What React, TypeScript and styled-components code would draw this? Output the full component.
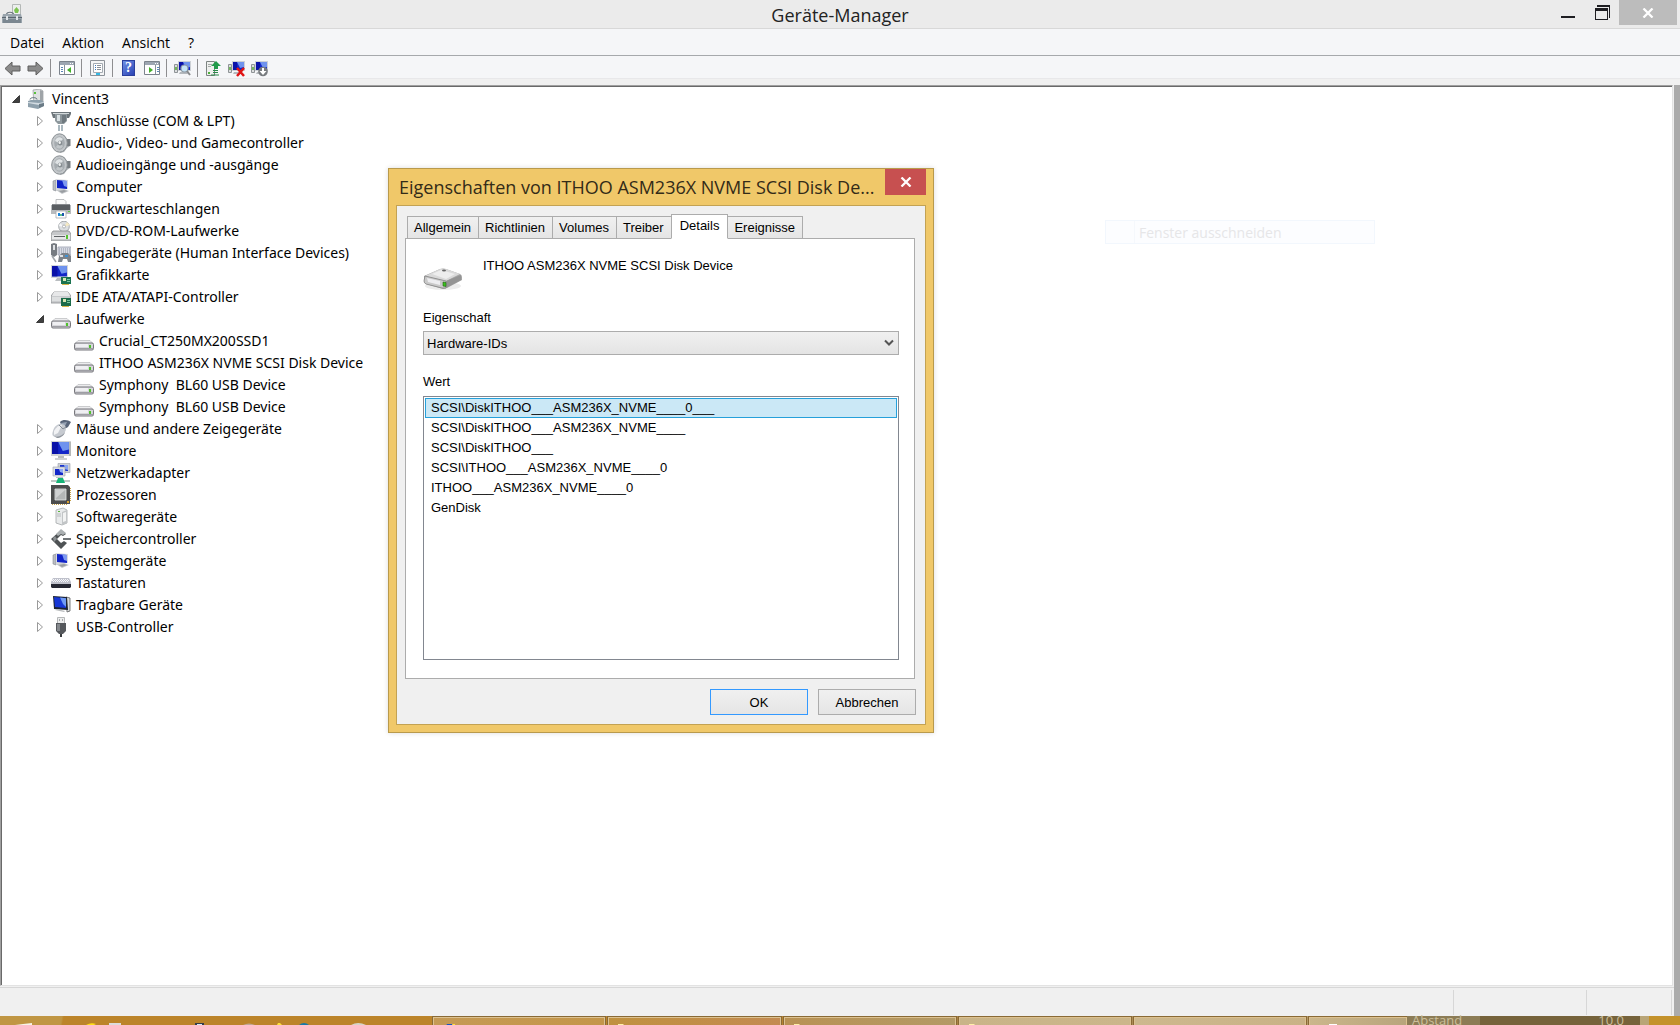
import React, { useState } from "react";
import styled, { createGlobalStyle, css } from "styled-components";

const ui = '"Open Sans", "Noto Sans", sans-serif';
const treeFont = '"Noto Sans", "Open Sans", sans-serif';
const classic = '"Liberation Sans", Arial, sans-serif';

const Global = createGlobalStyle`
  *, *::before, *::after { box-sizing: border-box; }
  body { margin: 0; font-family: ${ui}; color: #000; background: #f0f0f0; overflow: hidden; }
  button, select { font: inherit; color: inherit; margin: 0; padding: 0; border: 0; border-radius: 0; background: none; }
  ul { list-style: none; margin: 0; padding: 0; }
  svg { display: block; flex: none; }
`;

/* ---------- icons ---------- */

type IconName =
  | "toolbox" | "host" | "port" | "speaker" | "computer" | "printer" | "dvd" | "hid" | "display"
  | "ide" | "drive" | "mouse" | "monitor" | "network" | "cpu" | "software" | "storage"
  | "keyboard" | "portable" | "usb";

const screenBlue = (
  <>
    <path d="M0 0h11v8H0z" fill="#1226c8" />
    <path d="M4 0h7v5L7 6z" fill="#6f93ee" />
    <path d="M0 0h4v8H0z" fill="#0a12a8" />
  </>
);

const art: Record<IconName, React.ReactNode> = {
  toolbox: (
    <>
      <path d="M10.500 .500h8v11h-8z" fill="#eceeed" stroke="#b4b8b6" />
      <path d="M12 6l2.500-3L17 6l-1 3h-3z" fill="#7cc34f" />
      <path d="M4.500 10.500c0-3 7-3 7 0" fill="none" stroke="#6c777f" strokeWidth="1.200" />
      <path d="M1 10h18l1 4v5H0v-5z" fill="#9aa5ad" />
      <path d="M0 13h20v1H0z" fill="#5b666f" />
      <path d="M1 15h18v4H1z" fill="#7b8790" />
      <path d="M4 12h2v4H4zM14 12h2v4h-2z" fill="#dfe4e8" />
    </>
  ),
  host: (
    <>
      <path d="M6 1l7-1 3 2v14l-9 1z" fill="#dfe1e2" stroke="#a2a6a8" strokeWidth=".8" />
      <path d="M13 1l3 1v14h-3z" fill="#9fa4a8" />
      <path d="M7 3h2v2H7z" fill="#59c23a" />
      <path d="M3 10.500c0-2.500 7-2.500 7 0" fill="none" stroke="#62707a" />
      <path d="M1 12l3-1h10l3 2v4l-6 3-10-2z" fill="#8ea0ac" />
      <path d="M1 13l11 1 5-1v1l-5 2-11-2z" fill="#d3dce2" />
      <path d="M12 15l5-1v3l-5 2z" fill="#6b7b86" />
    </>
  ),
  port: (
    <>
      <path d="M0 1h20v2l-1 2-1 2h-2V4H4v3H2L1 4z" fill="#6d767b" />
      <path d="M4 2h12v8l-3 3H7l-3-3z" fill="#8d979c" />
      <path d="M6 4h3v6H6z" fill="#d8e0e3" />
      <path d="M2 2h16v1H2z" fill="#d5dbdd" />
      <path d="M11 4h4v6l-2 2h-2z" fill="#6f797f" />
      <path d="M7 14h2v6H7zM10 14h2v6h-2z" fill="#aab8bf" />
    </>
  ),
  speaker: (
    <>
      <path d="M9 1l4 1 3 4 3 1v6l-3 2-3 4-4 1z" fill="#a8adb0" />
      <path d="M16 6h3.500v7H16z" fill="#777d81" />
      <ellipse cx="8.500" cy="10" rx="7.800" ry="9.200" fill="#c3c7ca" stroke="#8a9094" />
      <ellipse cx="8.500" cy="10" rx="5.300" ry="6.800" fill="#a6acb0" />
      <path d="M4 8c1-4 5-5 8-2l-4 4z" fill="#dfe3e5" />
      <path d="M5 14l3-4 4 3c-1 3-5 3.500-7 1z" fill="#c2c7ca" />
      <ellipse cx="9" cy="10" rx="2.200" ry="2.600" fill="#858c90" />
      <ellipse cx="8.700" cy="9.500" rx="1.200" ry="1.500" fill="#eef0f0" />
    </>
  ),
  computer: (
    <>
      <path d="M2 4l3-1v11l-3-1z" fill="#b9bdc2" stroke="#8a8f96" strokeWidth=".6" />
      <path d="M5 2l12 1v9l-12 1z" fill="#d9dbe0" />
      <path d="M6 3l10 1v8l-10-1z" fill="#1124c9" />
      <path d="M11 3l5 1v6l-3-1z" fill="#7f9af0" />
      <path d="M5 13l8-1 5 2-7 3z" fill="#c5c8cb" />
      <path d="M8 14l5-1 3 1-5 2z" fill="#999da1" />
    </>
  ),
  printer: (
    <>
      <path d="M5 .500h8l2 2v6H5z" fill="#fafafa" stroke="#adb0b3" strokeWidth=".8" />
      <path d="M0 6h20v9H0z" fill="#b9bcbf" />
      <path d="M1 5h18v6H1z" fill="#5a5e62" />
      <path d="M1 5h18v1H1z" fill="#86898d" />
      <path d="M17 12h2v1h-2z" fill="#5ac73c" />
      <path d="M5 12h10v7H5z" fill="#fff" stroke="#a7aaad" strokeWidth=".8" />
      <path d="M7 14h2v3H7z" fill="#1c86d8" /><path d="M9 15h2v2H9z" fill="#5abf8a" /><path d="M11 14h2v3h-2z" fill="#1b56ad" />
    </>
  ),
  dvd: (
    <>
      <circle cx="13" cy="5.500" r="5.300" fill="#dcdfe1" stroke="#a5a9ac" />
      <path d="M13 6l3-5 3 3z" fill="#f4e9c4" /><path d="M13 6l-5-1 1-3z" fill="#f7f8fa" />
      <circle cx="13" cy="5.500" r="1.500" fill="#fff" stroke="#989ca0" strokeWidth=".7" />
      <path d="M2 10h16l2 3v7H0v-7z" fill="#c6c8ca" stroke="#86898c" strokeWidth=".8" />
      <path d="M1 14h18v4H1z" fill="#e6e7e8" />
      <path d="M3 15h11v1H3z" fill="#5d6164" />
      <path d="M15 14h2v4h-2z" fill="#55c32f" />
    </>
  ),
  hid: (
    <>
      <path d="M7 4h13v8H7z" fill="#d8dbe4" stroke="#9ba0ad" strokeWidth=".8" />
      <path d="M8 6h11M8 8h11M8 10h11" stroke="#8f95a5" strokeDasharray="1 1" />
      <path d="M0 1l3-1 3 1v11l-3 2-3-2z" fill="#777c82" />
      <path d="M2 2h2v5H2z" fill="#dfe2e5" />
      <path d="M1 13l4 6" stroke="#a0a5aa" strokeWidth="1.500" />
      <path d="M8 13l3-3h6l3 3v6h-3l-1-3h-4l-1 3H7z" fill="#7d838a" />
      <path d="M9 12h3v2H9z" fill="#e0e4e8" /><path d="M14 12h3v2h-3z" fill="#3f90d2" />
    </>
  ),
  display: (
    <>
      <path d="M0 0h17v13H0z" fill="#d4d7da" />
      <g transform="translate(1 1) scale(1.360 1.300)">{screenBlue}</g>
      <path d="M6 13h5l1 3H4z" fill="#b9bdc0" />
      <path d="M10 12h10v7H10z" fill="#1b7350" />
      <path d="M12 13h3v3h-3z" fill="#d9e8b6" /><path d="M16 14h3v1h-3zM16 16h3v1h-3z" fill="#7ec9a5" />
      <path d="M11 19h7v1h-7z" fill="#d9b64c" />
    </>
  ),
  ide: (
    <>
      <path d="M3 5h14l3 4v7H0V9z" fill="#c9cbcd" stroke="#8b8e91" strokeWidth=".8" />
      <path d="M3 5h14l2 4H1z" fill="#e7e8e9" />
      <path d="M1 10h9v4H1z" fill="#dddfe0" />
      <path d="M10 11h10v8H10z" fill="#1b6b49" />
      <path d="M12 12h3v3h-3z" fill="#d5e5b0" /><path d="M16 13h3v1h-3zM16 15h3v1h-3z" fill="#79c49c" />
      <path d="M11 19h7v1h-7z" fill="#d9b64c" />
    </>
  ),
  drive: (
    <>
      <path d="M4 9.500h12l3 3H1z" fill="#ececee" stroke="#b9babd" strokeWidth=".7" />
      <rect x=".5" y="12" width="19" height="7" rx="1.500" fill="#d6d6da" stroke="#77777c" />
      <path d="M2 13h12v3H2z" fill="#efeff2" />
      <path d="M1 17h18v1H1z" fill="#9e9ea4" />
      <path d="M15 14h2v3h-2z" fill="#4fc22b" />
    </>
  ),
  mouse: (
    <>
      <path d="M9 3c3-3 8-2 11 0l-3 5-5 3z" fill="#596579" />
      <path d="M10 4l6-1-3 6z" fill="#98a4b5" />
      <path d="M2 12c1-5 6-8 9-7 4 1 5 4 3 8-2 4-6 6-10 5-3-1-3-3-2-6z" fill="#c6cad0" />
      <path d="M3 12c2-4 5-6 8-6l-4 8-4 2z" fill="#f1f2f4" />
      <path d="M8 6l4 4 3-2" stroke="#848b94" fill="none" />
      <path d="M3 17c4 2 9-1 11-4-1 4-5 6-8 6z" fill="#8f959c" />
    </>
  ),
  monitor: (
    <>
      <path d="M0 0h20v15H0z" fill="#d2d4d4" />
      <g transform="translate(1 1) scale(1.540 1.500)">{screenBlue}</g>
      <path d="M18 1h2v14h-2z" fill="#b5b8b8" />
      <path d="M7 15h6v2H7z" fill="#b9bcbc" /><path d="M4 17h12v2H4z" fill="#cfd1d1" />
    </>
  ),
  network: (
    <>
      <path d="M7 .500h12v9H7z" fill="#cdd1d8" stroke="#9a9fa8" strokeWidth=".6" />
      <path d="M9 2h8v6H9z" fill="#1a35d0" /><path d="M13 2h4v5l-3-1z" fill="#89a5f2" />
      <path d="M2 4h12v9H2z" fill="#dcdfe4" stroke="#9a9fa8" strokeWidth=".6" />
      <path d="M4 6h8v6H4z" fill="#1226c8" /><path d="M8 6h4v4l-3-1z" fill="#8fa9f3" />
      <path d="M5 14h7v1H5z" fill="#bfc3c8" />
      <path d="M0 17h19v2H0z" fill="#bfc9c6" /><path d="M7 15h5l2 5H5z" fill="#17b478" />
    </>
  ),
  cpu: (
    <>
      <path d="M1 19.500h16" stroke="#c6a14b" strokeDasharray="1 1" /><path d="M19.500 3v14" stroke="#c6a14b" strokeDasharray="1 1" />
      <path d="M0 0h17l2 2v17H0z" fill="#4c4d4e" />
      <path d="M4 4h11v11H4z" fill="#b3b6b7" stroke="#e5e7e7" strokeWidth=".8" />
      <path d="M5 5h9l-9 8z" fill="#cfd1d2" /><path d="M16 16h2v2h-2z" fill="#dba22e" />
    </>
  ),
  software: (
    <>
      <path d="M5 3l7-2 4 2v13l-5 2-6-2z" fill="#e8eaeb" stroke="#a4a8aa" strokeWidth=".8" />
      <path d="M11 5l5-2v13l-5 2z" fill="#c2c5c7" />
      <path d="M12 6l3-1v9l-3 1z" fill="#f2f3f3" />
      <path d="M7 4h2v1H7z" fill="#59b63d" /><path d="M6 7h4M6 9h4" stroke="#b6babc" />
    </>
  ),
  storage: (
    <>
      <path d="M10 1l5 4-3 2-2-1-4 4 4 4 3-2 3 2-6 6L0 10z" fill="#4e5254" />
      <path d="M10 0l5 4-3 2-2-1-3 2-2-2z" fill="#abb0b2" />
      <path d="M12 9h8v2h-8z" fill="#707578" /><path d="M2 9l2-2 2 3-3 3z" fill="#8b9093" />
    </>
  ),
  keyboard: (
    <>
      <path d="M2 5h16l2 4v5H0V9z" fill="#bfc1cb" />
      <path d="M2 6.500h16M2 8.500h16" stroke="#f5f6fb" strokeDasharray="1 1" /><path d="M1 7.500h18" stroke="#f5f6fb" strokeDasharray="1 1" />
      <path d="M0 11h20v3l-1 1H1l-1-1z" fill="#262833" />
    </>
  ),
  portable: (
    <>
      <path d="M15 2l4 1v13l-3 1z" fill="#d8dada" stroke="#5d6061" strokeWidth=".8" />
      <path d="M2 1l14 1 1 13L3 14z" fill="#1d2433" />
      <path d="M3 2l12 1.200v9.800L4 12z" fill="#1637d6" />
      <path d="M9 2.600l6 .600v8.800l-3-3z" fill="#6f9bf5" />
      <path d="M6 14l8 2-1 1-9-2z" fill="#b9bcbe" />
    </>
  ),
  usb: (
    <>
      <path d="M6.500.500h7v6h-7z" fill="#eceded" stroke="#b5b7b8" />
      <path d="M8 2h1v2H8zM11 2h1v2h-1z" fill="#a6a8aa" />
      <path d="M5 6h10v8l-3 3H8l-3-3z" fill="#55585c" /><path d="M6 7h3v7H6z" fill="#85898d" />
      <path d="M9 17h2v3H9z" fill="#3b3d40" />
    </>
  ),
};

const Icon = ({ name }: { name: IconName }) => (
  <svg width="20" height="20" viewBox="0 0 20 20" aria-hidden="true">{art[name]}</svg>
);

const Cross = ({ size }: { size: number }) => (
  <svg width={size} height={size - 2} viewBox="0 0 12 10" aria-hidden="true">
    <path d="M1.500.500l9 9M10.500.500l-9 9" stroke="#fff" strokeWidth="2.300" />
  </svg>
);

/* ---------- main window ---------- */

const Screen = styled.div`
  position: relative;
  display: flex;
  flex-direction: column;
  height: 100vh;
`;

const TitleBar = styled.header`
  display: grid;
  grid-template-columns: 1fr auto 1fr;
  align-items: start;
  height: 29px;
  background: #ebebeb;
  border-bottom: 1px solid #d8d8d8;
`;

const AppBadge = styled.span`
  padding: 4px 2px;
`;

const WindowTitle = styled.h1`
  margin: 0;
  padding-top: 2px;
  font-size: 18px;
  line-height: 26px;
  font-weight: 400;
  color: #222;
`;

const Controls = styled.div`
  display: flex;
  justify-content: flex-end;
  padding-right: 3px;
`;

const Control = styled.button<{ $w: number; $fill?: string }>`
  display: flex;
  align-items: center;
  justify-content: center;
  width: ${(p) => p.$w}px;
  height: 25px;
  background: ${(p) => p.$fill ?? "transparent"};
`;

const MenuBar = styled.nav`
  display: flex;
  height: 27px;
  padding-left: 1px;
  background: #f5f6f8;
  border-bottom: 1px solid #a6a9ac;
`;

const MenuItem = styled.button`
  padding: 0 9px;
  font-size: 14px;
  line-height: 28px;
`;

const ToolBar = styled.div`
  display: flex;
  align-items: center;
  height: 23px;
  padding: 2px 0 0 1px;
  background: #f5f6f8;
  border-bottom: 1px solid #e8e8ea;
`;

const Tool = styled.button`
  display: flex;
  align-items: center;
  justify-content: center;
  width: 23px;
  height: 20px;
`;

const Rule = styled.span`
  width: 1px;
  height: 18px;
  margin: 0 4px 0 3px;
  background: #8e8e90;
`;

const Workspace = styled.div`
  display: grid;
  grid-template-columns: 1fr 6px;
  flex: 1;
  min-height: 0;
  padding-top: 6px;
`;

const Column = styled.div`
  display: flex;
  flex-direction: column;
  min-height: 0;
`;

const Edge = styled.div`
  background: #ababab;
`;

const TreePane = styled.main`
  flex: 1;
  min-height: 0;
  margin-right: 1px;
  border: 1px solid #a0a0a0;
  border-right-color: #e3e3e3;
  border-bottom-color: #e3e3e3;
  background: #fff;
  box-shadow: inset 1px 1px 0 #696969;
  padding: 2px 0 0 8px;
`;

const StatusBar = styled.footer`
  display: grid;
  grid-template-columns: 1fr 133px 85px;
  height: 29px;
  margin-top: 1px;
  padding: 2px 2px 1px 0;
  border-top: 1px solid #d7d7d7;
`;

const StatusCell = styled.div`
  border-right: 1px solid #d7d7d7;
`;

const TreeRow = styled.div`
  display: flex;
  align-items: center;
  height: 22px;
  font-family: ${treeFont};
  font-size: 14px;
  line-height: 22px;
  white-space: pre;
`;

const Branch = styled.ul<{ $indent: number }>`
  padding-left: ${(p) => p.$indent}px;
`;

const Toggle = styled.button`
  display: flex;
  align-items: center;
  justify-content: center;
  width: 14px;
  height: 20px;
  margin-right: 4px;
`;

const TreeLabel = styled.span`
  padding-left: 5px;
`;

const Arrow = ({ open }: { open: boolean }) => (
  <svg width="10" height="12" viewBox="0 0 10 12" aria-hidden="true">
    {open ? (
      <path d="M8.500 2.500v7h-7z" fill="#404040" stroke="#222" strokeWidth=".8" />
    ) : (
      <path d="M2.500 1.500v9l5-4.500z" fill="#fff" stroke="#9a9a9a" />
    )}
  </svg>
);

type Device = { name: string; icon: IconName; children?: string[] };

const devices: Device[] = [
  { name: "Anschlüsse (COM & LPT)", icon: "port" },
  { name: "Audio-, Video- und Gamecontroller", icon: "speaker" },
  { name: "Audioeingänge und -ausgänge", icon: "speaker" },
  { name: "Computer", icon: "computer" },
  { name: "Druckwarteschlangen", icon: "printer" },
  { name: "DVD/CD-ROM-Laufwerke", icon: "dvd" },
  { name: "Eingabegeräte (Human Interface Devices)", icon: "hid" },
  { name: "Grafikkarte", icon: "display" },
  { name: "IDE ATA/ATAPI-Controller", icon: "ide" },
  {
    name: "Laufwerke",
    icon: "drive",
    children: [
      "Crucial_CT250MX200SSD1",
      "ITHOO ASM236X NVME SCSI Disk Device",
      "Symphony  BL60 USB Device",
      "Symphony  BL60 USB Device",
    ],
  },
  { name: "Mäuse und andere Zeigegeräte", icon: "mouse" },
  { name: "Monitore", icon: "monitor" },
  { name: "Netzwerkadapter", icon: "network" },
  { name: "Prozessoren", icon: "cpu" },
  { name: "Softwaregeräte", icon: "software" },
  { name: "Speichercontroller", icon: "storage" },
  { name: "Systemgeräte", icon: "computer" },
  { name: "Tastaturen", icon: "keyboard" },
  { name: "Tragbare Geräte", icon: "portable" },
  { name: "USB-Controller", icon: "usb" },
];

const DeviceNode = ({ device }: { device: Device }) => {
  const [open, setOpen] = useState(Boolean(device.children));
  return (
    <li>
      <TreeRow>
        <Toggle aria-label={device.name} aria-expanded={open} onClick={() => setOpen(!open)}>
          <Arrow open={open} />
        </Toggle>
        <Icon name={device.icon} />
        <TreeLabel>{device.name}</TreeLabel>
      </TreeRow>
      {open && device.children && (
        <Branch $indent={41}>
          {device.children.map((child, i) => (
            <li key={i}>
              <TreeRow>
                <Icon name="drive" />
                <TreeLabel>{child}</TreeLabel>
              </TreeRow>
            </li>
          ))}
        </Branch>
      )}
    </li>
  );
};

/* ---------- toolbar drawings ---------- */

const ArrowTool = ({ flip }: { flip?: boolean }) => (
  <svg width="17" height="15" viewBox="0 0 17 15" aria-hidden="true">
    <path
      d="M1 7.500L8 1v4h8v5H8v4z"
      fill="#8b8b8b"
      stroke="#5f5f5f"
      strokeLinejoin="round"
      transform={flip ? "matrix(-1 0 0 1 17 0)" : undefined}
    />
  </svg>
);

const PaneTool = ({ right }: { right?: boolean }) => (
  <svg width="16" height="14" viewBox="0 0 16 14" aria-hidden="true">
    <path d="M.500.500h15v13H.500z" fill="#fff" stroke="#7c838c" />
    <path d="M1 1h14v3H1z" fill="#9da6b2" /><path d="M11 2h1v1h-1zM13 2h1v1h-1z" fill="#fff" />
    {right ? (
      <><path d="M11.500 4v9" stroke="#8a929c" /><path d="M13 6.500h2M13 8.500h2M13 10.500h2" stroke="#5c87b8" /><path d="M5 6l4 3-4 3z" fill="#43b02a" /></>
    ) : (
      <><path d="M5.500 4v9" stroke="#8a929c" /><path d="M2 6.500h2M2 8.500h2M2 10.500h2" stroke="#5c87b8" /><path d="M12 6L8 9l4 3z" fill="#43b02a" /></>
    )}
  </svg>
);

const SheetTool = () => (
  <svg width="16" height="17" viewBox="0 0 16 17" aria-hidden="true">
    <path d="M.500.500h14v15H.500z" fill="#f4f5f6" stroke="#8c9299" />
    <path d="M3.500 3.500h9v9h-9z" fill="#fff" stroke="#a4abb2" />
    <path d="M7 5.500h4M7 7.500h4M7 9.500h4" stroke="#8a9199" /><path d="M5 5.500h1M5 7.500h1M5 9.500h1" stroke="#3b78c2" />
    <path d="M6 14h4" stroke="#35b9e5" strokeWidth="2" />
  </svg>
);

const HelpBadge = styled.span`
  display: flex;
  align-items: center;
  justify-content: center;
  width: 13px;
  height: 16px;
  background: linear-gradient(135deg, #6f8fe4, #2a43b5);
  border: 1px solid #2b3f9c;
  color: #fff;
  font: 700 14px/14px "Liberation Serif", serif;
`;

const PcTool = ({ mark }: { mark: "scan" | "remove" | "disable" }) => (
  <svg width="18" height="17" viewBox="0 0 18 17" aria-hidden="true">
    <path d="M.500 4.500h3v8h-3z" fill="#dcdedf" stroke="#8f9497" /><path d="M1 7h2v3H1z" fill="#72b95c" />
    <path d="M4 1h13v10H4z" fill="#cdd1d6" />
    <g transform="translate(5 2)">{screenBlue}</g>
    <path d="M6 12h7l1 2H5z" fill="#b5b9bd" />
    {mark === "scan" && (
      <><circle cx="10.500" cy="8.500" r="3.500" fill="#c5e3f6" stroke="#8d9ba6" strokeWidth="1.200" /><path d="M13 11l3 4" stroke="#87898b" strokeWidth="2" /></>
    )}
    {mark === "remove" && <path d="M9 8l7 8M16 8l-7 8" stroke="#e01414" strokeWidth="2.500" />}
    {mark === "disable" && (
      <><circle cx="12" cy="11.500" r="4.800" fill="#777b7f" /><path d="M11 8h2v3h2.500L12 15l-3.500-4H11z" fill="#fff" /></>
    )}
  </svg>
);

const UpdateTool = () => (
  <svg width="17" height="17" viewBox="0 0 17 17" aria-hidden="true">
    <path d="M1.500 1.500h8v14h-8z" fill="#eef0ee" stroke="#7d8482" />
    <path d="M3 4.500h4M3 6.500h3" stroke="#a5aaa8" /><path d="M3 12h2v2H3z" fill="#4faf3c" />
    <path d="M11 1l5 5h-3v3H9V6H6z" fill="#219a4a" /><path d="M8 10.500h5M8 12.500h5M6 15h8" stroke="#2b8a4a" />
  </svg>
);

/* ---------- properties dialog ---------- */

const Dialog = styled.section`
  position: absolute;
  left: 388px;
  top: 168px;
  width: 546px;
  display: flex;
  flex-direction: column;
  padding: 0 7px 7px;
  background: #f0c869;
  border: 1px solid #b99a4c;
  box-shadow: 0 0 5px rgba(0, 0, 0, 0.14);
`;

const DialogBar = styled.header`
  display: flex;
  align-items: flex-start;
  justify-content: space-between;
  height: 36px;
  padding-left: 3px;
`;

const DialogTitle = styled.h2`
  flex: 1;
  min-width: 0;
  margin: 0;
  padding-top: 5px;
  font-size: 18px;
  line-height: 26px;
  font-weight: 400;
  color: #332b18;
  white-space: nowrap;
`;

const CloseButton = styled.button`
  display: flex;
  align-items: center;
  justify-content: center;
  width: 41px;
  height: 26px;
  background: #c75050;
`;

const Client = styled.div`
  padding: 8px 9px 9px 8px;
  background: #f0f0f0;
  border: 1px solid #c3a253;
  font-family: ${classic};
  font-size: 13px;
`;

const Tabs = styled.div`
  display: flex;
  align-items: flex-end;
  height: 24px;
  padding-left: 2px;
`;

const Tab = styled.button<{ $active?: boolean }>`
  height: 23px;
  padding: 0 7px 0 6px;
  margin: 0 -1px -1px 0;
  line-height: 20px;
  border: 1px solid #acacac;
  background: linear-gradient(#f0f0f0, #e5e5e5);
  ${(p) =>
    p.$active &&
    css`
      position: relative;
      height: 25px;
      padding: 0 8px 2px;
      border-bottom-color: #fff;
      background: #fff;
    `}
`;

const Panel = styled.div`
  display: flex;
  flex-direction: column;
  margin-right: 1px;
  padding: 18px 15px 18px 17px;
  background: #fff;
  border: 1px solid #acacac;
`;

const DeviceHead = styled.div`
  display: flex;
  gap: 20px;
  height: 52px;
  line-height: 18px;
`;

const FieldLabel = styled.label`
  line-height: 18px;
`;

const SelectBox = styled.div`
  display: grid;
  align-items: center;
  margin: 4px 0 18px;

  > * { grid-area: 1 / 1; }
  > svg { justify-self: end; margin-right: 5px; pointer-events: none; }
`;

const Select = styled.select`
  appearance: none;
  width: 100%;
  height: 24px;
  padding: 0 20px 0 3px;
  border: 1px solid #acacac;
  background: linear-gradient(#f0f0f0, #e4e4e4);
`;

const ListBox = styled.ul`
  height: 264px;
  margin-top: 5px;
  padding: 1px;
  border: 1px solid #828790;
`;

const Option = styled.li<{ $selected: boolean }>`
  height: 20px;
  padding: 0 5px;
  line-height: 18px;
  border: 1px solid ${(p) => (p.$selected ? "#26a0da" : "transparent")};
  background: ${(p) => (p.$selected ? "#cbe8f6" : "transparent")};
`;

const Actions = styled.div`
  display: flex;
  justify-content: flex-end;
  gap: 10px;
  padding-top: 10px;
`;

const PushButton = styled.button<{ $primary?: boolean }>`
  width: 98px;
  height: 26px;
  border: 1px solid ${(p) => (p.$primary ? "#3399ff" : "#acacac")};
  background: linear-gradient(#f0f0f0, #e5e5e5);
`;

const DiskPicture = () => (
  <svg width="40" height="40" viewBox="0 0 40 40" aria-hidden="true">
    <ellipse cx="20" cy="29" rx="18" ry="4" fill="#ececec" />
    <path d="M1 19L17 12q3-1 6 0l14 5q2 1 2 3v3l-15 8q-2 1-4 1L3 27q-2-1-2-3z" fill="#a5a5a5" />
    <path d="M2 19l15-7q3-1 6 0l14 5-14 7z" fill="#d9d9d9" />
    <path d="M9 17l9-4 14 4-9 5z" fill="#ededed" />
    <path d="M2 19l21 5v7l-4 0-16-4q-2-1-2-3z" fill="#c9c9c9" stroke="#858585" strokeWidth=".8" />
    <path d="M4 21l13 3v4L5 25z" fill="#ededf0" />
    <path d="M23 24l15-6v5l-15 8z" fill="#949494" />
    <path d="M20 25l3 .500v4l-3-.500z" fill="#39c21c" stroke="#255c17" strokeWidth=".6" />
    <ellipse cx="21" cy="13.500" rx="2" ry="1" fill="#666" />
  </svg>
);

const ids = [
  "SCSI\\DiskITHOO___ASM236X_NVME____0___",
  "SCSI\\DiskITHOO___ASM236X_NVME____",
  "SCSI\\DiskITHOO___",
  "SCSI\\ITHOO___ASM236X_NVME____0",
  "ITHOO___ASM236X_NVME____0",
  "GenDisk",
];

const tabs = ["Allgemein", "Richtlinien", "Volumes", "Treiber", "Details", "Ereignisse"];

const Properties = () => {
  const [selected, setSelected] = useState(0);
  return (
    <Dialog role="dialog" aria-labelledby="dialog-title">
      <DialogBar>
        <DialogTitle id="dialog-title">Eigenschaften von ITHOO ASM236X NVME SCSI Disk De...</DialogTitle>
        <CloseButton aria-label="Schließen"><Cross size={12} /></CloseButton>
      </DialogBar>
      <Client>
        <Tabs role="tablist">
          {tabs.map((t) => (
            <Tab key={t} role="tab" aria-selected={t === "Details"} $active={t === "Details"}>{t}</Tab>
          ))}
        </Tabs>
        <Panel>
          <DeviceHead>
            <DiskPicture />
            <span>ITHOO ASM236X NVME SCSI Disk Device</span>
          </DeviceHead>
          <FieldLabel htmlFor="property">Eigenschaft</FieldLabel>
          <SelectBox>
            <Select id="property"><option>Hardware-IDs</option></Select>
            <svg width="10" height="8" viewBox="0 0 10 8" aria-hidden="true">
              <path d="M1 1.500l4 4 4-4" fill="none" stroke="#555" strokeWidth="2" />
            </svg>
          </SelectBox>
          <FieldLabel as="span" id="values">Wert</FieldLabel>
          <ListBox role="listbox" aria-labelledby="values">
            {ids.map((id, i) => (
              <Option key={id} role="option" aria-selected={i === selected} $selected={i === selected} onClick={() => setSelected(i)}>
                {id}
              </Option>
            ))}
          </ListBox>
        </Panel>
        <Actions>
          <PushButton $primary>OK</PushButton>
          <PushButton>Abbrechen</PushButton>
        </Actions>
      </Client>
    </Dialog>
  );
};

const FadingMenu = styled.div`
  position: absolute;
  left: 1105px;
  top: 220px;
  width: 270px;
  height: 24px;
  padding-left: 28px;
  border: 1px solid #f2f7fd;
  background: #fcfdff;
`;

const FadingItem = styled.span`
  display: block;
  padding-left: 4px;
  border-left: 1px solid #f5f8fc;
  font-size: 14px;
  line-height: 24px;
  height: 22px;
  color: #e6e6e8;
`;

/* ---------- task bar ---------- */

const TaskBar = styled.div`
  display: flex;
  gap: 3px;
  height: 9px;
  background: linear-gradient(90deg, #bc842a 0 43%, #a8834a 60%, #b59c6c 80%);
`;

const QuickLaunch = styled.div`
  width: 430px;
  background: linear-gradient(100deg, #c09643 0 61px, #bc842a 63px);
`;

const Task = styled.div<{ $from: string; $to: string; $grow?: number }>`
  flex: ${(p) => p.$grow ?? 171} 1 0;
  border: 1px solid #dcc190;
  border-bottom: 0;
  box-shadow: 0 0 0 1px #8a6a35;
  margin-top: 1px;
  padding-left: 9px;
  background: linear-gradient(90deg, ${(p) => p.$from}, ${(p) => p.$to});
`;

const Gadget = styled.div<{ $w: number; $fill: string; $align?: string }>`
  display: flex;
  align-items: center;
  justify-content: ${(p) => p.$align ?? "flex-start"};
  width: ${(p) => p.$w}px;
  margin-left: -3px;
  padding: 0 16px 0 5px;
  background: ${(p) => p.$fill};
  color: #cbbf9b;
  font-size: 13px;
  line-height: 9px;
`;

const Corner = styled.div`
  width: 40px;
  margin-left: -3px;
  background: linear-gradient(90deg, #b9a577 0 9px, #c4922b 9px);
`;

const Folder = () => (
  <svg width="12" height="8" viewBox="0 0 12 8" aria-hidden="true">
    <path d="M0 6h5l1 1h6v1H0z" fill="#fff0a8" />
  </svg>
);

const LaunchIcons = () => (
  <svg width="429" height="9" viewBox="0 0 429 9" aria-hidden="true">
    <path d="M15 9l8-1 9-1v2z" fill="#f7f4e8" />
    <path d="M86 9q5-3 10-1l-2 1z" fill="#ffe018" />
    <path d="M109 7h12v2h-12z" fill="#dcdcdc" />
    <path d="M195 7h9v2h-9z" fill="#333c48" /><path d="M197 8h5v1h-5z" fill="#d8e8f4" />
    <path d="M243 9q6-3 12 0z" fill="#c2a894" />
    <path d="M278 7h2l2 2h-5z" fill="#ffe23c" />
    <path d="M299 9q5-4 10 0z" fill="#1779a8" />
    <path d="M351 9q7-4 15 0z" fill="#d7d5c8" />
  </svg>
);

export default function App() {
  return (
    <Screen>
      <Global />
      <TitleBar>
        <AppBadge><Icon name="toolbox" /></AppBadge>
        <WindowTitle>Geräte-Manager</WindowTitle>
        <Controls>
          <Control $w={34} aria-label="Minimieren">
            <svg width="14" height="12" viewBox="0 0 14 12"><path d="M0 9h14v2H0z" fill="#1e1e22" /></svg>
          </Control>
          <Control $w={34} aria-label="Wiederherstellen">
            <svg width="15" height="15" viewBox="0 0 15 15">
              <path d="M2 0h13v13h-1V2H2z" fill="#1e1e22" />
              <path d="M0 3h13v12H0zM1 6v8h11V6z" fill="#1e1e22" fillRule="evenodd" />
            </svg>
          </Control>
          <Control $w={58} $fill="#bcbcbc" aria-label="Schließen"><Cross size={12} /></Control>
        </Controls>
      </TitleBar>
      <MenuBar>
        <MenuItem>Datei</MenuItem>
        <MenuItem>Aktion</MenuItem>
        <MenuItem>Ansicht</MenuItem>
        <MenuItem>?</MenuItem>
      </MenuBar>
      <ToolBar>
        <Tool aria-label="Zurück"><ArrowTool /></Tool>
        <Tool aria-label="Vorwärts"><ArrowTool flip /></Tool>
        <Rule />
        <Tool aria-label="Konsolenstruktur"><PaneTool /></Tool>
        <Rule />
        <Tool aria-label="Eigenschaften"><SheetTool /></Tool>
        <Rule />
        <Tool aria-label="Hilfe"><HelpBadge>?</HelpBadge></Tool>
        <Tool aria-label="Aktionsbereich"><PaneTool right /></Tool>
        <Rule />
        <Tool aria-label="Nach Hardware suchen"><PcTool mark="scan" /></Tool>
        <Rule />
        <Tool aria-label="Treiber aktualisieren"><UpdateTool /></Tool>
        <Tool aria-label="Deinstallieren"><PcTool mark="remove" /></Tool>
        <Tool aria-label="Deaktivieren"><PcTool mark="disable" /></Tool>
      </ToolBar>
      <Workspace>
        <Column>
          <TreePane>
            <TreeRow>
              <Toggle aria-label="Vincent3" aria-expanded="true"><Arrow open /></Toggle>
              <Icon name="host" />
              <TreeLabel>Vincent3</TreeLabel>
            </TreeRow>
            <Branch $indent={24}>
              {devices.map((d) => <DeviceNode key={d.name} device={d} />)}
            </Branch>
          </TreePane>
          <StatusBar>
            <StatusCell />
            <StatusCell />
            <StatusCell />
          </StatusBar>
        </Column>
        <Edge />
      </Workspace>
      <TaskBar>
        <QuickLaunch><LaunchIcons /></QuickLaunch>
        <Task $from="#c59a55" $to="#c4964a">
          <svg width="14" height="8" viewBox="0 0 14 8"><path d="M4 6h5l3 2H3z" fill="#1a56c4" /><path d="M9 6h3v2h-2z" fill="#ffe23c" /></svg>
        </Task>
        <Task $from="#c0913f" $to="#c38b52"><Folder /></Task>
        <Task $from="#b99254" $to="#b39a66"><Folder /></Task>
        <Task $from="#c9b488" $to="#cbb68b"><Folder /></Task>
        <Task $from="#cdb88e" $to="#c9b286" />
        <Task $from="#cbb68b" $to="#b8a57c" $grow={92}>
          <svg width="24" height="8" viewBox="0 0 24 8"><path d="M10 6h8v2h-8z" fill="#fff" /></svg>
        </Task>
        <Gadget $w={73} $fill="#8c7c55">Abstand</Gadget>
        <Gadget $w={160} $fill="#76633b" $align="flex-end">10,0</Gadget>
        <Corner />
      </TaskBar>
      <FadingMenu><FadingItem>Fenster ausschneiden</FadingItem></FadingMenu>
      <Properties />
    </Screen>
  );
}
